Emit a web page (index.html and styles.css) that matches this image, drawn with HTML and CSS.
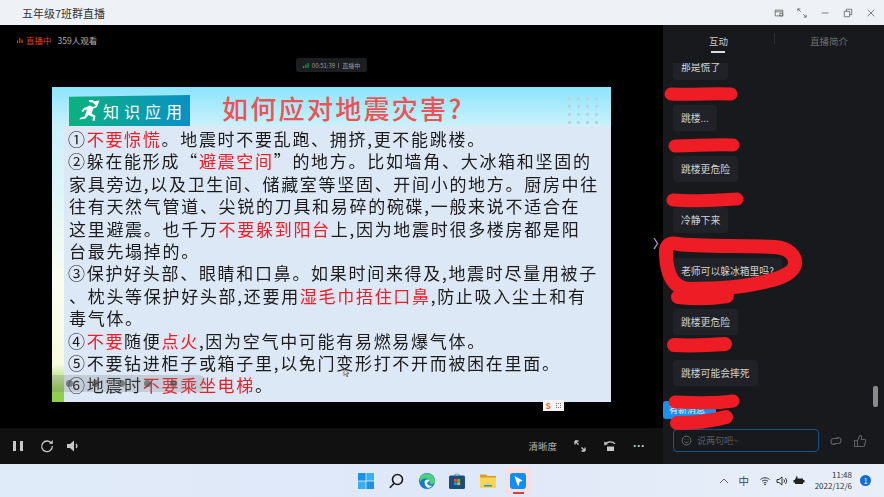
FILE: index.html
```html
<!DOCTYPE html>
<html lang="zh">
<head>
    <meta charset="utf-8">
    <title>五年级7班群直播</title>
    <link rel="stylesheet" href="styles.css">
</head>
<body>
    <div class="window">
        <div class="titlebar">
            <span class="title">五年级7班群直播</span>
            <div class="win-btns">
                <svg viewBox="0 0 12 12"><path d="M1.500 2.500h9v7h-9zM1.500 4.500h9M7 6.500h3.500v3H7z"/></svg>
                <svg viewBox="0 0 12 12"><path d="M1 1l3.500 3.500M1 1h3M1 1v3M11 11L7.500 7.500M11 11H8M11 11V8"/></svg>
                <svg viewBox="0 0 12 12"><path d="M2 6h8"/></svg>
                <svg viewBox="0 0 12 12"><path d="M1.500 4h6.500v6.500H1.500zM4 4V1.500h6.500V8H8"/></svg>
                <svg viewBox="0 0 12 12"><path d="M2 2l8 8M10 2l-8 8"/></svg>
            </div>
        </div>

        <div class="main">
            <div class="video">
                <div class="stage">
                    <div class="status">
                        <span class="live">
                            <svg class="bars" viewBox="0 0 6 6"><path d="M0 3.500h1.200V6H0zM2.200 1h1.200v5H2.200zM4.400 2.500h1.200V6H4.400z"/></svg>直播中
                        </span>
                        <span class="viewers">359人观看</span>
                    </div>
                    <div class="timer-row">
                        <div class="timer">
                            <svg class="bars-green" viewBox="0 0 6 6"><path d="M0 4h1.200v2H0zM2.200 2.500h1.200V6H2.200zM4.400 1h1.200v5H4.400z"/></svg>
                            <span>00:51:39</span><i></i><span>直播中</span>
                        </div>
                    </div>

                    <div class="slide">
                        <div class="slide-head">
                            <div class="tag">
                                <svg class="runner" viewBox="0 0 24 22">
                                    <path d="M13 2.500a2.300 2.300 0 1 1 .1 0zM6 8l6-2.500 3 1.500 3-1.500-4.500-4 8-1-2.500 6.500-3.500 1.500-2 5 4 2.500-1 5-2-.5.500-3.500-4.500-2-3 3.500-6 1 .5-1.500 4.500-1.500 2.500-7-2.500.5-1.500 2-1.500-1z"/>
                                </svg>
                                <span>知识应用</span>
                            </div>
                            <h1>如何应对地震灾害?</h1>
                            <div class="dots">
                                <i></i><i></i><i></i><i></i><i></i><i></i><i></i><i></i>
                                <i></i><i></i><i></i><i></i><i></i><i></i><i></i><i></i>
                            </div>
                        </div>
                        <div class="slide-wrap">
                            <div class="slide-edge"></div>
                            <div class="slide-body">
                                <p>①<b>不要惊慌</b>。地震时不要乱跑、拥挤,更不能跳楼。</p>
                                <p>②躲在能形成“<b>避震空间</b>”的地方。比如墙角、大冰箱和坚固的</p>
                                <p class="in">家具旁边,以及卫生间、储藏室等坚固、开间小的地方。厨房中往</p>
                                <p class="in">往有天然气管道、尖锐的刀具和易碎的碗碟,一般来说不适合在</p>
                                <p class="in">这里避震。也千万<b>不要躲到阳台</b>上,因为地震时很多楼房都是阳</p>
                                <p class="in">台最先塌掉的。</p>
                                <p>③保护好头部、眼睛和口鼻。如果时间来得及,地震时尽量用被子</p>
                                <p class="in">、枕头等保护好头部,还要用<b>湿毛巾捂住口鼻</b>,防止吸入尘土和有</p>
                                <p class="in">毒气体。</p>
                                <p>④<b>不要</b>随便<b>点火</b>,因为空气中可能有易燃易爆气体。</p>
                                <p>⑤不要钻进柜子或箱子里,以免门变形打不开而被困在里面。</p>
                                <p>⑥地震时<b>不要乘坐电梯</b>。</p>
                            </div>
                        </div>
                        <div class="pen-bar"><i></i><i></i><i></i><i></i><i></i></div>
                        <div class="wps"><span>S</span><em></em></div>
                        <svg class="cursor" viewBox="0 0 8 12"><path d="M1 1v8l2-2 1.500 3.500 1.200-.5L4.300 6.500H7z"/></svg>
                    </div>
                    <span class="chevron">〉</span>
                </div>

                <div class="controls">
                    <div class="ctl-left">
                        <svg class="ic" viewBox="0 0 14 14"><path class="fill" d="M2 2h3v10H2zM9 2h3v10H9z"/></svg>
                        <svg class="ic" viewBox="0 0 14 14"><path d="M11.500 4.500A5.300 5.300 0 1 0 12.300 7"/><path class="fill" d="M9 4.800h3.800V1z"/></svg>
                        <svg class="ic" viewBox="0 0 14 14"><path class="fill" d="M1 5h3l4-3.500v11L4 9H1z"/><path d="M10 5a3 3 0 0 1 0 4"/></svg>
                    </div>
                    <div class="ctl-right">
                        <span class="quality">清晰度</span>
                        <svg class="ic" viewBox="0 0 14 14"><path d="M2 2l3.500 3.500M2 2h3.500M2 2v3.500M12 12L8.500 8.500M12 12H8.500M12 12V8.500"/></svg>
                        <svg class="ic" viewBox="0 0 14 14"><path d="M2 5.500C4 2 10 2 12 5"/><path class="fill" d="M1 2.500l.5 4 3.500-1.500zM4 7.500h7V12H4z"/></svg>
                        <span class="more">···</span>
                    </div>
                </div>
            </div>

            <div class="chat">
                <div class="tabs">
                    <div class="tab active">互动</div>
                    <div class="tab">直播简介</div>
                </div>
                <div class="messages">
                    <div class="bubble">那是慌了</div>
                    <div class="bubble">跳楼...</div>
                    <div class="bubble">跳楼更危险</div>
                    <div class="bubble">冷静下来</div>
                    <div class="bubble">老师可以躲冰箱里吗?</div>
                    <div class="bubble">跳楼更危险</div>
                    <div class="bubble">跳楼可能会摔死</div>
                </div>
                <div class="scroll-thumb"></div>
                <div class="new-msg">有新消息 ˅</div>
                <div class="input-row">
                    <div class="input">
                        <svg viewBox="0 0 12 12"><circle cx="6" cy="6" r="4.800"/><path d="M3.800 7.300c1 1.300 3.400 1.300 4.400 0M4 4.700h.8M7.200 4.700H8"/></svg>
                        <span>说两句吧~</span>
                    </div>
                    <svg class="act" viewBox="0 0 14 14"><path d="M9 4.500H5a3 3 0 0 0 0 6h1.500M5 9.500h4a3 3 0 0 0 0-6H7.500"/></svg>
                    <svg class="act" viewBox="0 0 14 14"><path d="M4.500 6.500H1.500v6h3zM4.500 6.500L7 1.500c1.500 0 2 1 1.700 2.200L8.300 5.500h3.200c1 0 1.400.8 1.200 1.500l-1.200 4.500c-.2.700-.7 1-1.300 1H4.500"/></svg>
                </div>
            </div>

            <svg class="scribbles" viewBox="0 25 884 439">
                <path class="s13" d="M671 94C690 95 715 93 731 94"/>
                <path class="s13" d="M675 146C695 146 715 144 733 145"/>
                <path class="s13" d="M673 200C695 202 715 200 737 199"/>
                <path class="s14" d="M678 244C700 247 745 245 775 247C788 248 796 255 795 264C794 272 782 278 768 281C745 287 715 289 690 289C672 289 666 272 666 252C666 245 670 242 678 244"/>
                <path class="s14" d="M678 297C695 299 715 298 727 296"/>
                <path class="s14" d="M674 345C695 346 712 345 725 344"/>
                <path class="s13" d="M675 402C695 403 720 403 733 401"/>
                <path class="s14" d="M677 423C695 423 715 420 726 417"/>
            </svg>
        </div>

        <div class="taskbar">
            <div></div>
            <div class="apps">
                <div class="app">
                    <svg viewBox="0 0 16 16"><path fill="#1b92e8" d="M0 0h7.600v7.600H0z"/><path fill="#35b1f2" d="M8.400 0H16v7.600H8.400zM0 8.400h7.600V16H0z"/><path fill="#1b92e8" d="M8.400 8.400H16V16H8.400z"/></svg>
                </div>
                <div class="app">
                    <svg viewBox="0 0 16 16" fill="none" stroke="#1a1a1a" stroke-width="1.600"><circle cx="9.500" cy="6.500" r="5"/><path d="M6 10.500L1.800 14.800"/></svg>
                </div>
                <div class="app">
                    <svg viewBox="0 0 16 16"><circle cx="8" cy="8" r="8" fill="#1479c9"/><path fill="#4fd07c" d="M1 4.500C3.500-.8 14-1.500 16 7.500c.2 3-3 4.500-5.500 3.500 1.500-4-3-7-6.500-5-1.500.800-2.500 2-3 3z"/><path fill="#fff" d="M5.500 9c0-2.500 4-3.500 5-1-.500 1-3 1-2 3 .8 1.500 3 2 5 1.500-1.500 2-3.500 2.500-5 2.200C6.500 14 5.500 11.500 5.500 9z" opacity=".9"/></svg>
                </div>
                <div class="app">
                    <svg viewBox="0 0 16 16"><path fill="#4fa6dc" d="M5 3c0-3.500 6-3.500 6 0h-1c0-2-4-2-4 0z"/><rect y="2.500" width="16" height="13.500" rx="1.500" fill="#1d4d7c"/><path fill="#f25022" d="M5 6h2.800v2.800H5z"/><path fill="#7fba00" d="M8.300 6h2.800v2.800H8.300z"/><path fill="#00a4ef" d="M5 9.300h2.800v2.800H5z"/><path fill="#ffb900" d="M8.300 9.300h2.800v2.800H8.300z"/></svg>
                </div>
                <div class="app">
                    <svg viewBox="0 0 16 16"><path fill="#d99f1c" d="M0 1.500h6l1.500 1.500H16v4H0z"/><path fill="#fbd356" d="M0 4.500h16V15H0z"/><path fill="#1f8fd6" d="M4 12h8v1.500H4z"/></svg>
                </div>
                <div class="app current">
                    <svg viewBox="0 0 16 16"><rect width="16" height="16" rx="3" fill="#0f8ff0"/><path fill="#fff" d="M4.500 3l8 4.500-3 1.500-1 4.500-1.800-3.500z"/></svg>
                    <i></i>
                </div>
            </div>
            <div class="tray">
                <svg class="tray-ic chevron-up" viewBox="0 0 12 12"><path d="M2 8l4-4 4 4"/></svg>
                <span class="ime">中</span>
                <svg class="tray-ic" viewBox="0 0 12 12"><path d="M1.500 4.500c2.500-2.300 6.500-2.300 9 0M3 6.300c1.700-1.500 4.300-1.500 6 0M4.500 8c.8-.7 2.200-.7 3 0"/><circle class="solid" cx="6" cy="9.500" r=".8"/></svg>
                <svg class="tray-ic" viewBox="0 0 12 12"><path d="M1 4.500h2L6 2v8L3 7.500H1zM8 4.500a2.500 2.500 0 0 1 0 3M9.500 3a4.500 4.500 0 0 1 0 6"/></svg>
                <svg class="tray-ic" viewBox="0 0 12 12"><path class="solid" d="M2 3.500h8v5.500H2zM3 1.500h1.500v2H3zM.5 5H2v2.500H.5z"/><path class="solid" d="M10 5h1.500v2.500H10z"/></svg>
                <div class="clock"><span>11:48</span><span>2022/12/6</span></div>
                <span class="badge">1</span>
            </div>
        </div>
    </div>
</body>
</html>
```

FILE: styles.css
```css
* {
    box-sizing: border-box;
}
body {
    margin: 0;
    width: 884px;
    height: 497px;
    overflow: hidden;
    font-family: "Noto Sans CJK SC", "Noto Sans", sans-serif;
}
.window {
    display: flex;
    flex-direction: column;
    height: 497px;
}

/* title bar */
.titlebar {
    height: 25px;
    flex: none;
    background: #eef1f5;
    display: flex;
    align-items: center;
    justify-content: space-between;
    padding: 0 8px 0 22px;
}
.title {
    font-size: 11px;
    color: #333;
}
.win-btns {
    display: flex;
    gap: 13px;
}
.win-btns svg {
    width: 10px;
    height: 10px;
    fill: none;
    stroke: #666;
    stroke-width: 1;
}

/* video side */
.main {
    position: relative;
    height: 439px;
    flex: none;
    display: flex;
}
.video {
    width: 663px;
    flex: none;
    display: flex;
    flex-direction: column;
    background: #000;
}
.stage {
    position: relative;
    height: 403px;
}
.status {
    height: 33px;
    padding: 8px 0 0 17px;
    display: flex;
    align-items: flex-start;
    gap: 6px;
    font-size: 8.500px;
    line-height: 14px;
}
.live {
    color: #d8432b;
    display: flex;
    align-items: center;
    gap: 3px;
}
.bars {
    width: 6px;
    height: 6px;
    fill: #d8432b;
}
.viewers {
    color: #b0b0b0;
}
.timer-row {
    display: flex;
    justify-content: center;
}
.timer {
    height: 14px;
    width: 71px;
    background: #1d1e20;
    border-radius: 3px;
    display: flex;
    align-items: center;
    justify-content: center;
    gap: 3px;
    font-size: 6px;
    color: #9a9a9a;
}
.bars-green {
    width: 6px;
    height: 6px;
    fill: #1f9b4c;
}
.timer i {
    width: 1px;
    height: 5px;
    background: #666;
}

/* the slide in the stream */
.slide {
    position: relative;
    width: 559px;
    height: 315px;
    margin: 15px 0 0 52px;
    display: flex;
    flex-direction: column;
    background: linear-gradient(#8be5fd, #c9f1fb 12%, #fafcf0 60%, #f8fbe0 88%, #8fcf50 96%);
}
.slide-head {
    height: 39px;
    flex: none;
    display: flex;
    align-items: flex-start;
    padding: 8px 10px 0 17px;
}
.tag {
    width: 121px;
    height: 31px;
    flex: none;
    display: flex;
    align-items: center;
    gap: 1px;
    padding-left: 9px;
    background: linear-gradient(100deg, #0cb27c, #0a8fc8);
    color: #fff;
    font-size: 16px;
    letter-spacing: 5px;
    white-space: nowrap;
    clip-path: polygon(0 6%, 100% 0, 100% 100%, 0 100%);
}
.runner {
    width: 24px;
    height: 22px;
    fill: #fff;
}
.slide-head h1 {
    margin: -5px 0 0 32px;
    font-size: 26px;
    font-weight: 500;
    line-height: 36px;
    letter-spacing: 2.300px;
    color: #ef5252;
    white-space: nowrap;
}
.dots {
    margin-left: auto;
    margin-top: 2px;
    width: 33px;
    display: grid;
    grid-template-columns: repeat(4, 3px);
    gap: 5px 6px;
}
.dots i {
    width: 3px;
    height: 3px;
    background: #b9d3de;
}
.slide-wrap {
    flex: 1;
    display: flex;
}
.slide-edge {
    width: 12px;
    flex: none;
}
.slide-body {
    flex: 1;
    background: #dde8f7;
    padding: 2px 0 0 4px;
    filter: blur(0.3px);
}
.slide-body p {
    margin: 0;
    font-size: 17px;
    line-height: 22.400px;
    letter-spacing: 1.700px;
    color: #1c1c1c;
    white-space: nowrap;
}
.slide-body p.in {
    padding-left: 1px;
}
.slide-body b {
    font-weight: 400;
    color: #ee1c25;
}
.pen-bar {
    position: absolute;
    left: 0;
    top: 288px;
    width: 154px;
    height: 17px;
    border-radius: 0 8px 8px 0;
    background: rgba(120, 120, 120, 0.25);
    display: flex;
    align-items: center;
    justify-content: space-around;
    padding: 0 20px 0 5px;
}
.pen-bar i {
    width: 7px;
    height: 7px;
    border-radius: 50%;
    background: rgba(70, 70, 70, 0.6);
}
.wps {
    position: absolute;
    left: 491px;
    top: 313px;
    width: 21px;
    height: 11px;
    background: #f4f4f4;
    display: flex;
    align-items: center;
    justify-content: space-around;
}
.wps span {
    font-size: 8px;
    line-height: 9px;
    font-weight: 700;
    color: #e8622a;
}
.wps em {
    width: 5px;
    height: 5px;
    border: 1px dotted #777;
}
.cursor {
    position: absolute;
    left: 291px;
    top: 281px;
    width: 7px;
    height: 10px;
    fill: #eee;
    stroke: #444;
    stroke-width: 0.8;
}
.chevron {
    position: absolute;
    right: -2px;
    top: 211px;
    font-size: 12px;
    line-height: 16px;
    color: #ddd;
}

/* player controls */
.controls {
    height: 36px;
    flex: none;
    background: #111;
    display: flex;
    align-items: center;
    justify-content: space-between;
    padding: 0 18px 0 11px;
}
.ctl-left {
    display: flex;
    align-items: center;
    gap: 12px;
}
.ctl-left .ic:first-child {
    margin-right: 3px;
}
.ctl-right {
    display: flex;
    align-items: center;
    gap: 16px;
}
.ic {
    width: 14px;
    height: 14px;
    fill: none;
    stroke: #c8c8c8;
    stroke-width: 1.300;
}
.ic .fill {
    fill: #c8c8c8;
    stroke: none;
}
.quality {
    font-size: 9.500px;
    color: #b4b4b4;
}
.more {
    color: #c8c8c8;
    font-size: 12px;
    font-weight: 700;
    line-height: 14px;
    font-family: "Liberation Sans", sans-serif;
}

/* chat side */
.chat {
    position: relative;
    width: 221px;
    flex: none;
    background: #18191c;
    display: flex;
    flex-direction: column;
}
.tabs {
    height: 38px;
    flex: none;
    display: flex;
    align-items: center;
    position: relative;
    padding-bottom: 6px;
}
.tabs::after {
    content: "";
    position: absolute;
    left: 111px;
    top: 8px;
    width: 1px;
    height: 11px;
    background: #2c2d30;
}
.tab {
    width: 111px;
    text-align: center;
    font-size: 9.500px;
    color: #6f7073;
    position: relative;
}
.tab:last-child {
    width: 110px;
}
.tab.active {
    color: #c9c9c9;
}
.tab.active::after {
    content: "";
    position: absolute;
    left: 48px;
    top: 17px;
    width: 14px;
    height: 2px;
    background: #ddd;
}
.messages {
    height: 362px;
    flex: none;
    overflow: hidden;
    display: flex;
    flex-direction: column;
    align-items: flex-start;
    gap: 25px;
    padding-left: 10px;
}
.bubble {
    height: 26px;
    flex: none;
    padding: 0 8px;
    background: #202227;
    border-radius: 4px;
    font-size: 9.800px;
    line-height: 26px;
    color: #d2d2d2;
    white-space: nowrap;
}
.bubble:first-child {
    margin-top: -9px;
}
.scroll-thumb {
    position: absolute;
    left: 210px;
    top: 361px;
    width: 5px;
    height: 21px;
    border-radius: 2px;
    background: #8a8a8a;
}
.new-msg {
    position: absolute;
    left: 0;
    top: 376px;
    width: 53px;
    height: 18px;
    padding-left: 6px;
    background: #1c8fef;
    border-radius: 3px;
    font-size: 9px;
    line-height: 18px;
    color: #e8f4ff;
}
.input-row {
    display: flex;
    align-items: center;
    gap: 10px;
    padding: 4px 0 12px 10px;
}
.input {
    width: 146px;
    height: 23px;
    border: 1px solid #14568c;
    border-radius: 4px;
    display: flex;
    align-items: center;
    gap: 5px;
    padding-left: 7px;
    font-size: 9px;
    color: #5c5e62;
}
.input svg {
    width: 11px;
    height: 11px;
    fill: none;
    stroke: #77797d;
    stroke-width: 0.9;
}
.act {
    width: 14px;
    height: 14px;
    fill: none;
    stroke: #5d5f63;
    stroke-width: 1.100;
}
.scribbles {
    position: absolute;
    left: 0;
    top: 0;
    width: 884px;
    height: 439px;
    fill: none;
    stroke: #ee1c25;
    stroke-linecap: round;
    stroke-linejoin: round;
    pointer-events: none;
}
.s13 {
    stroke-width: 13;
}
.s14 {
    stroke-width: 14;
}

/* windows task bar */
.taskbar {
    height: 33px;
    flex: none;
    display: grid;
    grid-template-columns: 1fr auto 1fr;
    align-items: center;
    background: linear-gradient(90deg, #e0ebf9, #dfe8f8 50%, #e8eff9);
}
.apps {
    display: flex;
    align-items: center;
    gap: 4.400px;
}
.app {
    position: relative;
    width: 26px;
    height: 28px;
    display: flex;
    align-items: center;
    justify-content: center;
}
.app svg {
    width: 16px;
    height: 16px;
}
.app.current {
    background: #f8dfe1;
    border-radius: 3px;
}
.app.current i {
    position: absolute;
    left: 8px;
    bottom: 1px;
    width: 11px;
    height: 2px;
    background: #c8454e;
}
.tray {
    display: flex;
    align-items: center;
    justify-content: flex-end;
    padding-right: 13px;
    gap: 5px;
}
.tray-ic {
    width: 12px;
    height: 12px;
    fill: none;
    stroke: #222;
    stroke-width: 0.900;
}
.tray-ic .solid {
    fill: #222;
    stroke: none;
}
.chevron-up {
    stroke: #555;
    margin-right: 4px;
}
.ime {
    font-size: 10.500px;
    color: #444;
    margin-right: 5px;
}
.clock {
    width: 42px;
    display: flex;
    flex-direction: column;
    align-items: flex-end;
    font-size: 8px;
    line-height: 10.500px;
    color: #333;
    margin-right: 3px;
}
.badge {
    width: 11px;
    height: 11px;
    border-radius: 50%;
    background: #0b6fd6;
    color: #fff;
    font-size: 7.500px;
    line-height: 11px;
    text-align: center;
}
```
